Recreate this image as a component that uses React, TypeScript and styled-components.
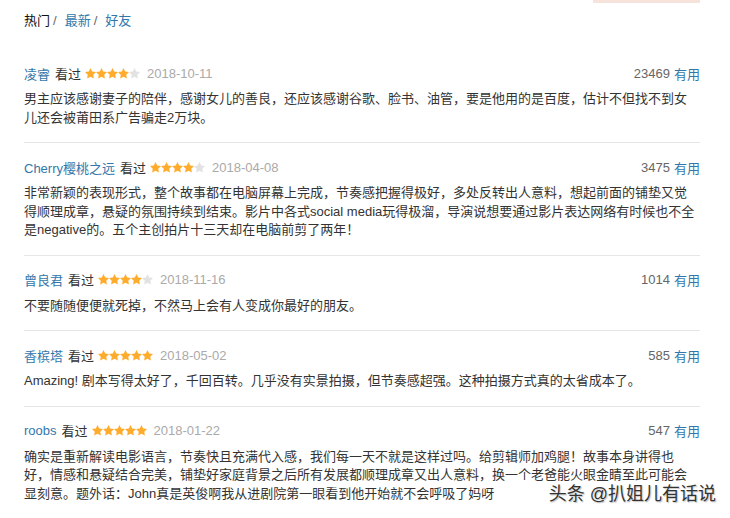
import React from "react";
import styled, { createGlobalStyle } from "styled-components";

const GlobalStyle = createGlobalStyle`
  html, body {
    margin: 0;
    padding: 0;
    background: #fff;
  }
  body {
    font-family: "Liberation Sans", Arial, "Noto Sans CJK SC", sans-serif;
    font-size: 13px;
    color: #333;
  }
`;

const Page = styled.main`
  position: relative;
  width: 730px;
  height: 518px;
  overflow: hidden;
  box-sizing: border-box;
  padding: 0 30px 0 24px;
`;

const TopRow = styled.div`
  display: flex;
  justify-content: space-between;
  align-items: flex-start;
  height: 49px;
`;

const Tabs = styled.nav`
  display: flex;
  align-items: center;
  margin-top: 11px;
  line-height: 20px;
`;

const Tab = styled.span<{ active?: boolean }>`
  color: ${({ active }) => (active ? "#111" : "#37a")};
`;

const Sep = styled.span`
  color: #666;
  margin: 0 8px 0 3px;
`;

const ButtonEdge = styled.div`
  width: 107px;
  height: 3px;
  background: #f6e4dc;
`;

const CommentItem = styled.div`
  padding: 14px 0 15px;
  border-bottom: 1px solid #e6e6e6;
`;

const Header = styled.div`
  display: flex;
  align-items: center;
  justify-content: space-between;
  height: 20px;
  margin-bottom: 7px;
`;

const Info = styled.div`
  display: flex;
  align-items: center;
`;

const Name = styled.span`
  color: #37a;
`;

const Status = styled.span`
  color: #333;
  margin-left: 5px;
`;

const Stars = styled.span`
  display: flex;
  margin-left: 4px;
`;

const DateText = styled.span`
  color: #aaa;
  margin-left: 7px;
`;

const Votes = styled.div`
  display: flex;
  align-items: center;
`;

const Count = styled.span`
  color: #666;
`;

const Useful = styled.span`
  color: #37a;
  margin-left: 4px;
`;

const Body = styled.p`
  margin: 0;
  padding-right: 3px;
  line-height: 18.5px;
  color: #333;
`;

const Watermark = styled.div`
  position: absolute;
  right: 14px;
  top: 483px;
  font-size: 18px;
  line-height: 22px;
  color: #333;
  text-shadow: 0 0 2px #fff, 1px 1px 1px rgba(0, 0, 0, 0.3);
`;

const Star = ({ on }: { on: boolean }) => (
  <svg width="11" height="11" viewBox="2 2 20 20">
    <polygon
      points="12,2 15.09,8.26 22,9.27 17,14.14 18.18,21.02 12,17.77 5.82,21.02 7,14.14 2,9.27 8.91,8.26"
      fill={on ? "#ffac2d" : "#e2e2e2"}
    />
  </svg>
);

interface Comment {
  name: string;
  rating: number;
  date: string;
  votes: string;
  content: string;
}

const comments: Comment[] = [
  {
    name: "凌睿",
    rating: 4,
    date: "2018-10-11",
    votes: "23469",
    content:
      "男主应该感谢妻子的陪伴，感谢女儿的善良，还应该感谢谷歌、脸书、油管，要是他用的是百度，估计不但找不到女儿还会被莆田系广告骗走2万块。",
  },
  {
    name: "Cherry樱桃之远",
    rating: 4,
    date: "2018-04-08",
    votes: "3475",
    content:
      "非常新颖的表现形式，整个故事都在电脑屏幕上完成，节奏感把握得极好，多处反转出人意料，想起前面的铺垫又觉得顺理成章，悬疑的氛围持续到结束。影片中各式social media玩得极溜，导演说想要通过影片表达网络有时候也不全是negative的。五个主创拍片十三天却在电脑前剪了两年！",
  },
  {
    name: "曾良君",
    rating: 4,
    date: "2018-11-16",
    votes: "1014",
    content: "不要随随便便就死掉，不然马上会有人变成你最好的朋友。",
  },
  {
    name: "香槟塔",
    rating: 5,
    date: "2018-05-02",
    votes: "585",
    content: "Amazing! 剧本写得太好了，千回百转。几乎没有实景拍摄，但节奏感超强。这种拍摄方式真的太省成本了。",
  },
  {
    name: "roobs",
    rating: 5,
    date: "2018-01-22",
    votes: "547",
    content:
      "确实是重新解读电影语言，节奏快且充满代入感，我们每一天不就是这样过吗。给剪辑师加鸡腿！故事本身讲得也好，情感和悬疑结合完美，铺垫好家庭背景之后所有发展都顺理成章又出人意料，换一个老爸能火眼金睛至此可能会显刻意。题外话：John真是英俊啊我从进剧院第一眼看到他开始就不会呼吸了妈呀",
  },
];

export default function App() {
  return (
    <>
      <GlobalStyle />
      <Page>
        <TopRow>
          <Tabs>
            <Tab active>热门</Tab>
            <Sep>/</Sep>
            <Tab>最新</Tab>
            <Sep>/</Sep>
            <Tab>好友</Tab>
          </Tabs>
          <ButtonEdge />
        </TopRow>
        {comments.map((c) => (
          <CommentItem key={c.name}>
            <Header>
              <Info>
                <Name>{c.name}</Name>
                <Status>看过</Status>
                <Stars>
                  {[0, 1, 2, 3, 4].map((i) => (
                    <Star key={i} on={i < c.rating} />
                  ))}
                </Stars>
                <DateText>{c.date}</DateText>
              </Info>
              <Votes>
                <Count>{c.votes}</Count>
                <Useful>有用</Useful>
              </Votes>
            </Header>
            <Body>{c.content}</Body>
          </CommentItem>
        ))}
        <Watermark>头条 @扒姐儿有话说</Watermark>
      </Page>
    </>
  );
}
